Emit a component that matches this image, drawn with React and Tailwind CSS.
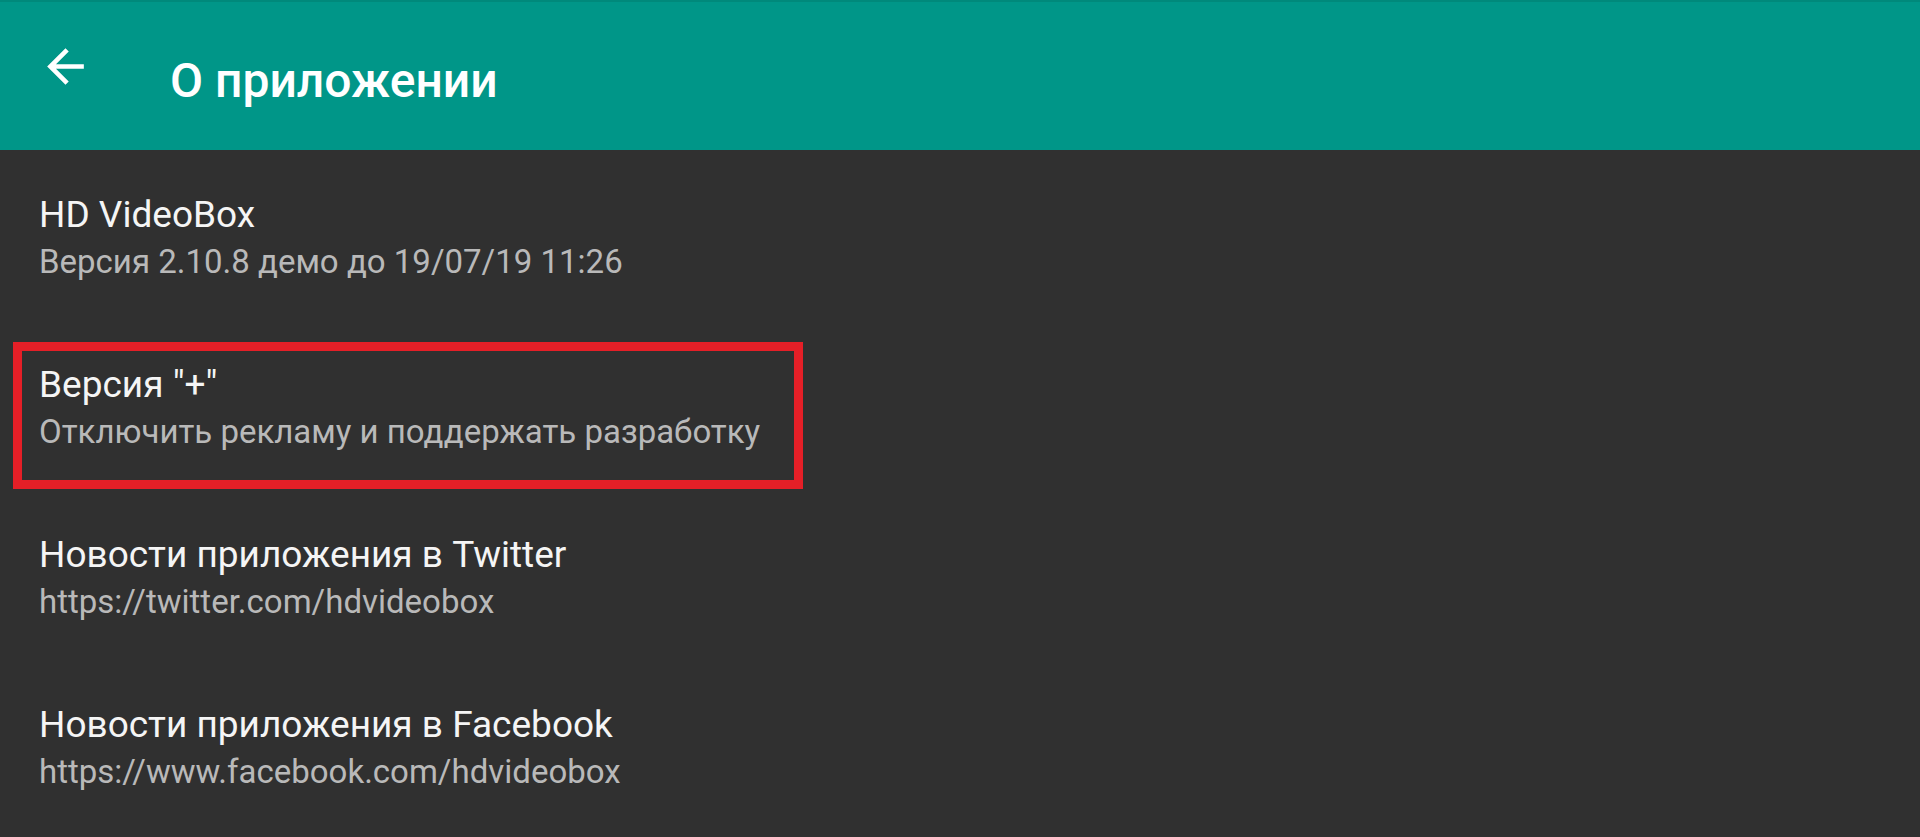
//Imports

//Objects
const items = [
  { title: "HD VideoBox", subtitle: "Версия 2.10.8 демо до 19/07/19 11:26" },
  {
    title: 'Версия "+"',
    subtitle: "Отключить рекламу и поддержать разработку",
    marked: true,
  },
  {
    title: "Новости приложения в Twitter",
    subtitle: "https://twitter.com/hdvideobox",
  },
  {
    title: "Новости приложения в Facebook",
    subtitle: "https://www.facebook.com/hdvideobox",
  },
];

//ArrowBack
const ArrowBack = () => (
  <svg viewBox="0 0 24 24" className="w-[55px] h-[55px]" fill="#ffffff">
    <path d="M20 11H7.83l5.59-5.59L12 4l-8 8 8 8 1.41-1.41L7.83 13H20v-2z" />
  </svg>
);

//App
const App = () => {
  return (
    <div
      className="w-full h-[837px] bg-[#303030] overflow-hidden"
      style={{ fontFamily: "Roboto, 'Noto Sans', sans-serif" }}
    >
      <header className="h-[150px] bg-[#009688] border-t-2 border-[#00897b] flex items-start">
        <div className="ml-[38px] mt-[37px] flex items-center">
          <ArrowBack />
        </div>
        <h1 className="ml-[77px] mt-[55px] text-white text-[48px] font-medium leading-none">
          О приложении
        </h1>
      </header>

      <ul className="flex flex-col">
        {items.map((item) => (
          <li key={item.title} className="relative h-[170px] pl-[39px] pt-[43px]">
            <p className="text-[37px] leading-[44px] text-[#f5f5f5]">
              {item.title}
            </p>
            <p className="mt-[5px] text-[33px] leading-[40px] text-[#b9b9b9]">
              {item.subtitle}
            </p>
            {item.marked ? (
              <div className="absolute left-[13px] top-[22px] w-[790px] h-[147px] border-[9px] border-[#e51f27]" />
            ) : null}
          </li>
        ))}
      </ul>
    </div>
  );
};

export default App;
